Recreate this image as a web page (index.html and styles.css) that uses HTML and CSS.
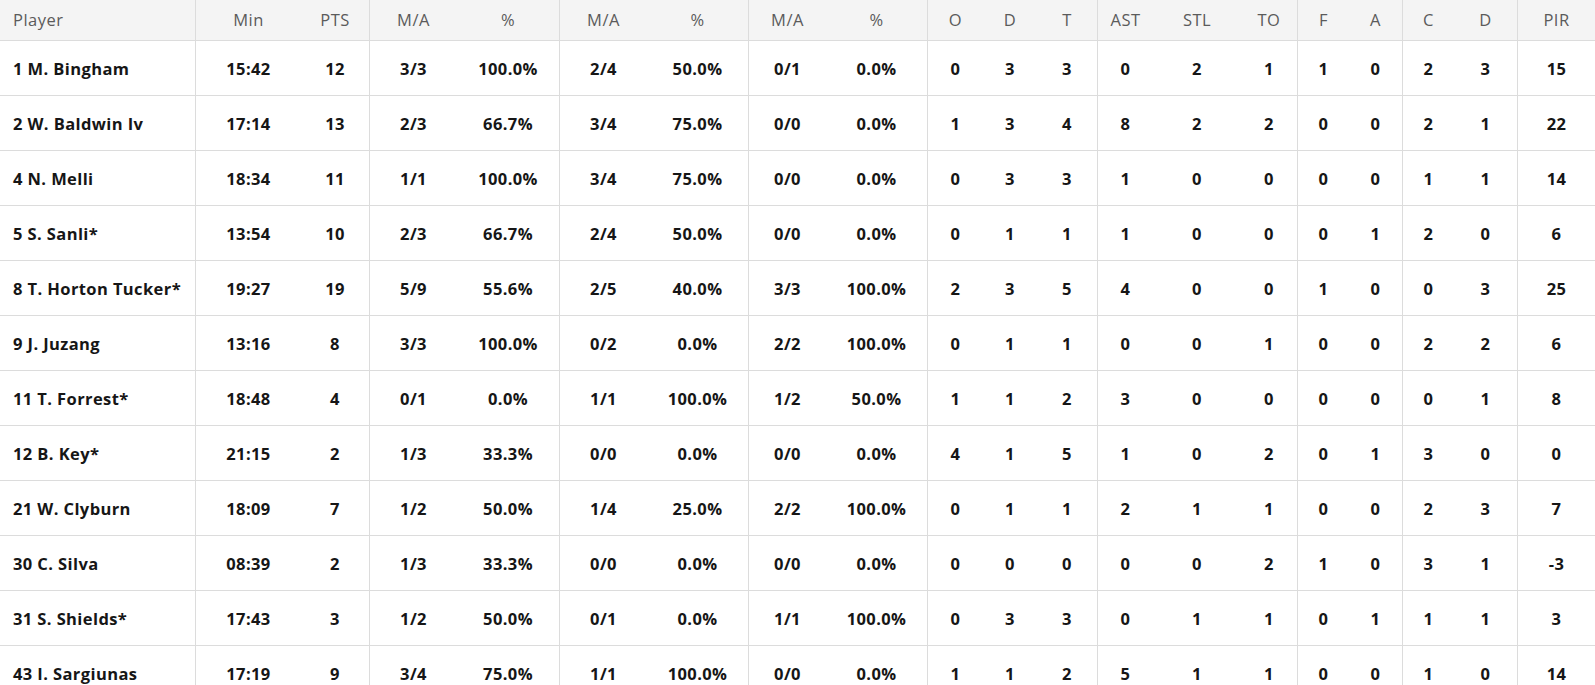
FILE: index.html
```html
<!DOCTYPE html>
<html lang="en">
<head>
<meta charset="utf-8">
<title>Box score</title>
<link rel="stylesheet" href="styles.css">
</head>
<body>
<table class="box">
  <colgroup>
    <col class="c-player"><col class="c-min"><col class="c-pts">
    <col class="c-ma1"><col class="c-pc1"><col class="c-ma2"><col class="c-pc2"><col class="c-ma3"><col class="c-pc3">
    <col class="c-o"><col class="c-d"><col class="c-t">
    <col class="c-ast"><col class="c-stl"><col class="c-to">
    <col class="c-f"><col class="c-a"><col class="c-c"><col class="c-d2"><col class="c-pir">
  </colgroup>
  <thead>
    <tr>
      <th class="name">Player</th><th class="g">Min</th><th>PTS</th>
      <th class="g">M/A</th><th>%</th><th class="g">M/A</th><th>%</th><th class="g">M/A</th><th>%</th>
      <th class="g">O</th><th>D</th><th>T</th>
      <th class="g">AST</th><th>STL</th><th>TO</th>
      <th class="g">F</th><th>A</th><th class="g">C</th><th>D</th><th class="g">PIR</th>
    </tr>
  </thead>
  <tbody>
    <tr><td class="name">1 M. Bingham</td><td class="g">15:42</td><td>12</td><td class="g">3/3</td><td>100.0%</td><td class="g">2/4</td><td>50.0%</td><td class="g">0/1</td><td>0.0%</td><td class="g">0</td><td>3</td><td>3</td><td class="g">0</td><td>2</td><td>1</td><td class="g">1</td><td>0</td><td class="g">2</td><td>3</td><td class="g">15</td></tr>
    <tr><td class="name">2 W. Baldwin Iv</td><td class="g">17:14</td><td>13</td><td class="g">2/3</td><td>66.7%</td><td class="g">3/4</td><td>75.0%</td><td class="g">0/0</td><td>0.0%</td><td class="g">1</td><td>3</td><td>4</td><td class="g">8</td><td>2</td><td>2</td><td class="g">0</td><td>0</td><td class="g">2</td><td>1</td><td class="g">22</td></tr>
    <tr><td class="name">4 N. Melli</td><td class="g">18:34</td><td>11</td><td class="g">1/1</td><td>100.0%</td><td class="g">3/4</td><td>75.0%</td><td class="g">0/0</td><td>0.0%</td><td class="g">0</td><td>3</td><td>3</td><td class="g">1</td><td>0</td><td>0</td><td class="g">0</td><td>0</td><td class="g">1</td><td>1</td><td class="g">14</td></tr>
    <tr><td class="name">5 S. Sanli*</td><td class="g">13:54</td><td>10</td><td class="g">2/3</td><td>66.7%</td><td class="g">2/4</td><td>50.0%</td><td class="g">0/0</td><td>0.0%</td><td class="g">0</td><td>1</td><td>1</td><td class="g">1</td><td>0</td><td>0</td><td class="g">0</td><td>1</td><td class="g">2</td><td>0</td><td class="g">6</td></tr>
    <tr><td class="name">8 T. Horton Tucker*</td><td class="g">19:27</td><td>19</td><td class="g">5/9</td><td>55.6%</td><td class="g">2/5</td><td>40.0%</td><td class="g">3/3</td><td>100.0%</td><td class="g">2</td><td>3</td><td>5</td><td class="g">4</td><td>0</td><td>0</td><td class="g">1</td><td>0</td><td class="g">0</td><td>3</td><td class="g">25</td></tr>
    <tr><td class="name">9 J. Juzang</td><td class="g">13:16</td><td>8</td><td class="g">3/3</td><td>100.0%</td><td class="g">0/2</td><td>0.0%</td><td class="g">2/2</td><td>100.0%</td><td class="g">0</td><td>1</td><td>1</td><td class="g">0</td><td>0</td><td>1</td><td class="g">0</td><td>0</td><td class="g">2</td><td>2</td><td class="g">6</td></tr>
    <tr><td class="name">11 T. Forrest*</td><td class="g">18:48</td><td>4</td><td class="g">0/1</td><td>0.0%</td><td class="g">1/1</td><td>100.0%</td><td class="g">1/2</td><td>50.0%</td><td class="g">1</td><td>1</td><td>2</td><td class="g">3</td><td>0</td><td>0</td><td class="g">0</td><td>0</td><td class="g">0</td><td>1</td><td class="g">8</td></tr>
    <tr><td class="name">12 B. Key*</td><td class="g">21:15</td><td>2</td><td class="g">1/3</td><td>33.3%</td><td class="g">0/0</td><td>0.0%</td><td class="g">0/0</td><td>0.0%</td><td class="g">4</td><td>1</td><td>5</td><td class="g">1</td><td>0</td><td>2</td><td class="g">0</td><td>1</td><td class="g">3</td><td>0</td><td class="g">0</td></tr>
    <tr><td class="name">21 W. Clyburn</td><td class="g">18:09</td><td>7</td><td class="g">1/2</td><td>50.0%</td><td class="g">1/4</td><td>25.0%</td><td class="g">2/2</td><td>100.0%</td><td class="g">0</td><td>1</td><td>1</td><td class="g">2</td><td>1</td><td>1</td><td class="g">0</td><td>0</td><td class="g">2</td><td>3</td><td class="g">7</td></tr>
    <tr><td class="name">30 C. Silva</td><td class="g">08:39</td><td>2</td><td class="g">1/3</td><td>33.3%</td><td class="g">0/0</td><td>0.0%</td><td class="g">0/0</td><td>0.0%</td><td class="g">0</td><td>0</td><td>0</td><td class="g">0</td><td>0</td><td>2</td><td class="g">1</td><td>0</td><td class="g">3</td><td>1</td><td class="g">-3</td></tr>
    <tr><td class="name">31 S. Shields*</td><td class="g">17:43</td><td>3</td><td class="g">1/2</td><td>50.0%</td><td class="g">0/1</td><td>0.0%</td><td class="g">1/1</td><td>100.0%</td><td class="g">0</td><td>3</td><td>3</td><td class="g">0</td><td>1</td><td>1</td><td class="g">0</td><td>1</td><td class="g">1</td><td>1</td><td class="g">3</td></tr>
    <tr><td class="name">43 I. Sargiunas</td><td class="g">17:19</td><td>9</td><td class="g">3/4</td><td>75.0%</td><td class="g">1/1</td><td>100.0%</td><td class="g">0/0</td><td>0.0%</td><td class="g">1</td><td>1</td><td>2</td><td class="g">5</td><td>1</td><td>1</td><td class="g">0</td><td>0</td><td class="g">1</td><td>0</td><td class="g">14</td></tr>
  </tbody>
</table>
</body>
</html>
```

FILE: styles.css
```css
html, body {
  margin: 0;
  padding: 0;
  background: #ffffff;
}

body {
  font-family: "Open Sans", "Noto Sans", Arial, sans-serif;
  overflow: hidden;
}

.box {
  width: 1595px;
  table-layout: fixed;
  border-collapse: separate;
  border-spacing: 0;
}

.c-player { width: 195px; }
.c-min { width: 106px; }
.c-pts { width: 68px; }
.c-ma1 { width: 88px; }
.c-pc1 { width: 102px; }
.c-ma2 { width: 88px; }
.c-pc2 { width: 101px; }
.c-ma3 { width: 78px; }
.c-pc3 { width: 101px; }
.c-o { width: 56px; }
.c-d { width: 54px; }
.c-t { width: 60px; }
.c-ast { width: 56px; }
.c-stl { width: 88px; }
.c-to { width: 56px; }
.c-f { width: 52px; }
.c-a { width: 53px; }
.c-c { width: 52px; }
.c-d2 { width: 63px; }
.c-pir { width: 78px; }

.box th,
.box td {
  padding: 0;
  text-align: center;
  white-space: nowrap;
  border-bottom: 1px solid #dcdcdc;
}

.box th {
  height: 41px;
  background: #f4f4f4;
  color: #5b5b5b;
  font-size: 16.5px;
  font-weight: 400;
  letter-spacing: 0.5px;
  vertical-align: middle;
  padding-bottom: 2px;
  box-sizing: border-box;
}

.box td {
  height: 54px;
  color: #161616;
  font-size: 16.5px;
  font-weight: 700;
  letter-spacing: 0.4px;
}

.box .g {
  border-left: 1px solid #dcdcdc;
}

.box .name {
  text-align: left;
  padding-left: 13px;
}
```
